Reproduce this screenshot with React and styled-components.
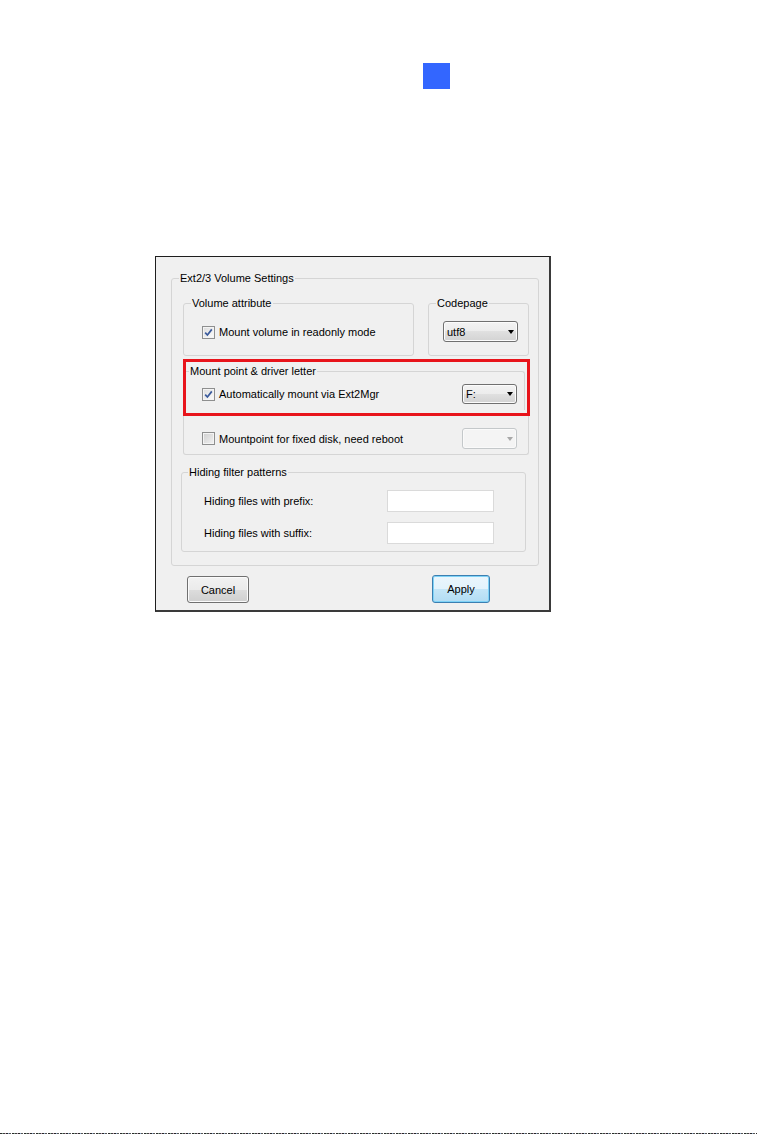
import React from 'react'
import styled, { createGlobalStyle } from 'styled-components'

const GlobalStyle = createGlobalStyle`
  html, body {
    margin: 0;
    padding: 0;
    background: #fff;
  }
  * {
    box-sizing: border-box;
  }
`

const Page = styled.div`
  width: 757px;
  height: 1134px;
  display: flex;
  flex-direction: column;
  font-family: "Liberation Sans", Arial, sans-serif;
  font-size: 11px;
  color: #000;
  overflow: hidden;
`

const Marker = styled.div`
  width: 27px;
  height: 26px;
  margin: 63px 0 0 423px;
  background: #3366ff;
`

const Dialog = styled.div`
  margin: 167px 0 0 155px;
  width: 396px;
  height: 356px;
  background: #f0f0f0;
  border: 1px solid #1e1e1e;
  border-right: 2px solid #3a3a3a;
  border-bottom: 2px solid #3a3a3a;
  padding: 14px 0 0 15px;
`

const Group = styled.fieldset`
  margin: ${p => p.$m || 0};
  padding: 0;
  min-width: 0;
  width: ${p => p.$w}px;
  height: ${p => p.$h}px;
  border: 1px solid #d5d5d5;
  border-radius: 3px;
  ${p => p.$open && `
    border-left: none;
    border-bottom: none;
    border-radius: 0 3px 0 0;
  `}
`

const Title = styled.legend`
  margin-left: ${p => p.$x}px;
  padding: 0 1px;
  line-height: 14px;
  font-size: 11px;
`

const Body = styled.div`
  padding: ${p => p.$pad};
`

const Row = styled.div`
  display: flex;
  align-items: center;
  justify-content: ${p => p.$spread ? 'space-between' : 'flex-start'};
`

const Highlight = styled.div`
  margin-top: 3px;
  width: 347px;
  height: 57px;
  border: 3px solid #e8141b;
  padding-top: 2px;
`

const Panel = styled.div`
  width: 346px;
  height: 39px;
  border: 1px solid #d5d5d5;
  border-top: none;
  border-radius: 0 0 3px 3px;
  padding: 12px 11px 0 18px;
`

const CheckLabel = styled.label`
  display: flex;
  align-items: center;
  gap: 4px;
  line-height: 14px;
`

const Box = styled.span`
  width: 13px;
  height: 13px;
  border: 1px solid #8e8f8f;
  background: ${p => p.$checked
    ? 'linear-gradient(135deg, #dcdcdc, #fdfdfd)'
    : 'linear-gradient(135deg, #cfcfcf, #f2f2f2)'};
  box-shadow: inset 0 0 0 1px #f4f4f4;
  display: flex;
  align-items: center;
  justify-content: center;
`

const Select = styled.div`
  width: ${p => p.$w}px;
  height: ${p => p.$h}px;
  border: 1px solid ${p => p.$disabled ? '#c4c8ca' : '#707070'};
  border-radius: 3px;
  background: ${p => p.$disabled
    ? '#f4f4f4'
    : 'linear-gradient(#f3f3f3 0%, #ececec 50%, #e0e0e0 50%, #d3d3d3 100%)'};
  box-shadow: inset 0 0 0 1px ${p => p.$disabled ? '#fafafa' : '#fcfcfc'};
  display: flex;
  align-items: center;
  justify-content: space-between;
  padding: 0 3px 0 3px;
`

const Arrow = styled.span`
  width: 0;
  height: 0;
  border-left: 3.5px solid transparent;
  border-right: 3.5px solid transparent;
  border-top: 4px solid ${p => p.$disabled ? '#a8a8a8' : '#000'};
`

const Fields = styled.div`
  display: grid;
  grid-template-columns: 183px 107px;
  row-gap: 10px;
  align-items: center;
  padding: 11px 0 0 22px;
`

const Input = styled.div`
  height: 22px;
  background: #fff;
  border: 1px solid #dadada;
`

const Buttons = styled.div`
  margin: 9px 0 0 16px;
  width: 303px;
  display: flex;
  justify-content: space-between;
  align-items: flex-end;
`

const Button = styled.button`
  width: ${p => p.$w}px;
  height: ${p => p.$h}px;
  padding: 0;
  font-family: inherit;
  font-size: 11px;
  color: #000;
  border-radius: 3px;
  border: 1px solid ${p => p.$default ? '#3c7fb1' : '#707070'};
  background: ${p => p.$default
    ? 'linear-gradient(#eaf6fd 0%, #e2f3fc 50%, #c4e6f8 50%, #b2dcf3 100%)'
    : 'linear-gradient(#f2f2f2 0%, #ebebeb 50%, #dddddd 50%, #cfcfcf 100%)'};
  box-shadow: inset 0 0 0 1px ${p => p.$default ? '#7fd3f7' : '#fbfbfb'};
`

const Edge = styled.div`
  margin-top: auto;
  height: 1px;
  background: repeating-linear-gradient(90deg,
    #2a2a2a 0 2px, #7a9a86 2px 3px, #3d3d3d 3px 5px, #b99ab0 5px 6px,
    #262626 6px 8px, #8aa6c8 8px 9px, #555 9px 11px, #fff 11px 12px);
`

const Check = ({ checked, children }) => (
  <CheckLabel>
    <Box $checked={checked}>
      {checked && (
        <svg width="9" height="9" viewBox="0 0 9 9">
          <path d="M1.2 4.6 L3.4 7 L7.8 1.4" fill="none" stroke="#3a5a9c" strokeWidth="1.7" />
        </svg>
      )}
    </Box>
    {children}
  </CheckLabel>
)

const Combo = ({ value, w, h, disabled }) => (
  <Select $w={w} $h={h} $disabled={disabled}>
    <span>{value}</span>
    <Arrow $disabled={disabled} />
  </Select>
)

const App = () => (
  <Page>
    <GlobalStyle />
    <Marker />
    <Dialog>
      <Group $w={368} $h={295}>
        <Title $x={7}>Ext2/3 Volume Settings</Title>
        <Body $pad="11px 0 0 11px">
          <Row>
            <Group $w={231} $h={60}>
              <Title $x={7}>Volume attribute</Title>
              <Body $pad="15px 0 0 18px">
                <Check checked>Mount volume in readonly mode</Check>
              </Body>
            </Group>
            <Group $w={101} $h={60} $m="0 0 0 14px">
              <Title $x={7}>Codepage</Title>
              <Body $pad="11px 0 0 14px">
                <Combo value="utf8" w={75} h={21} />
              </Body>
            </Group>
          </Row>

          <Highlight>
            <Group $w={339} $h={46} $open>
              <Title $x={3}>Mount point &amp; driver letter</Title>
              <Body $pad="6px 7px 0 16px">
                <Row $spread>
                  <Check checked>Automatically mount via Ext2Mgr</Check>
                  <Combo value="F:" w={55} h={20} />
                </Row>
              </Body>
            </Group>
          </Highlight>

          <Panel>
            <Row $spread>
              <Check>Mountpoint for fixed disk, need reboot</Check>
              <Combo value="" w={55} h={21} disabled />
            </Row>
          </Panel>

          <Group $w={345} $h={87} $m="10px 0 0 -2px">
            <Title $x={6}>Hiding filter patterns</Title>
            <Fields>
              <span>Hiding files with prefix:</span>
              <Input />
              <span>Hiding files with suffix:</span>
              <Input />
            </Fields>
          </Group>
        </Body>
      </Group>

      <Buttons>
        <Button $w={62} $h={27}>Cancel</Button>
        <Button $w={58} $h={28} $default>Apply</Button>
      </Buttons>
    </Dialog>
    <Edge />
  </Page>
)

export default App
